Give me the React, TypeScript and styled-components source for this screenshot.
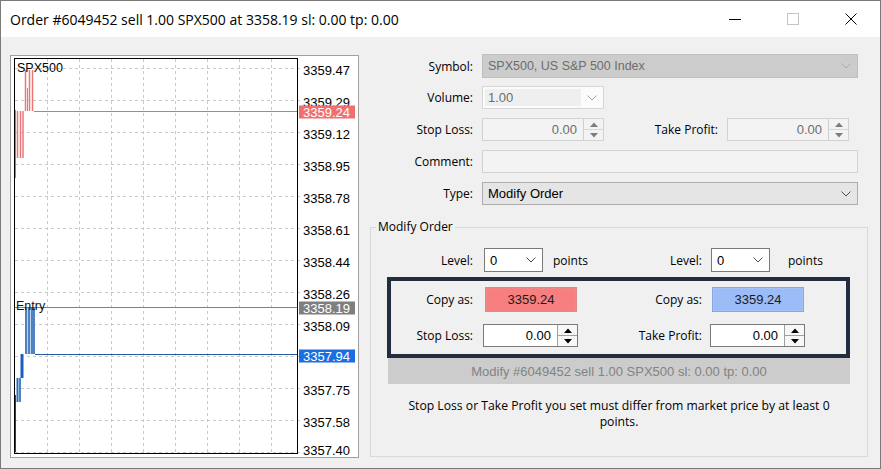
import React from 'react'
import styled, { createGlobalStyle } from 'styled-components'

const ui = '"Open Sans", "Noto Sans", sans-serif'
const tahoma = '"Liberation Sans", Arial, sans-serif'

const colors = {
  face: '#f0f0f0',
  frame: '#7a7a7a',
  darkBox: '#222d3f',
  grid: '#c9c9c9',
  red: '#f07070',
  blue: '#1a6fe0',
  grey: '#7f7f7f'
}

const GlobalStyle = createGlobalStyle`
  html, body {
    margin: 0;
    padding: 0;
    background: ${colors.face};
  }
  * {
    box-sizing: border-box;
  }
`

const Window = styled.div`
  width: 881px;
  height: 469px;
  border: 1px solid ${colors.frame};
  background: ${colors.face};
  display: flex;
  flex-direction: column;
  overflow: hidden;
  font-family: ${ui};
  font-size: 12px;
  color: #000;
`
const TitleBar = styled.div`
  height: 36px;
  flex-shrink: 0;
  background: #fff;
  display: flex;
  align-items: center;
  padding-left: 9px;
`
const Title = styled.div`
  flex: 1;
  font-size: 14px;
  white-space: nowrap;
`
const Caption = styled.div`
  width: 58px;
  height: 36px;
  display: flex;
  align-items: center;
  justify-content: center;
`
const Body = styled.div`
  flex: 1;
  display: flex;
  align-items: flex-start;
  padding-left: 9px;
`
const ChartPanel = styled.div`
  width: 349px;
  height: 403px;
  margin-top: 18px;
  border: 1px solid #a0a0a0;
  background: #fff;
  svg {
    display: block;
  }
  text {
    font-family: ${tahoma};
    font-size: 13px;
  }
`
const Pane = styled.div`
  width: 498px;
  margin-left: 11px;
  padding-top: 17px;
  display: flex;
  flex-direction: column;
`
const Row = styled.div<{ $h?: number; $mb?: number; $mt?: number }>`
  display: flex;
  align-items: center;
  height: ${p => p.$h || 23}px;
  margin-top: ${p => p.$mt || 0}px;
  margin-bottom: ${p => (p.$mb === undefined ? 9 : p.$mb)}px;
`
const Label = styled.span<{ $w: number; $gap?: number }>`
  width: ${p => p.$w}px;
  flex-shrink: 0;
  text-align: right;
  margin-right: ${p => (p.$gap === undefined ? 9 : p.$gap)}px;
  white-space: nowrap;
`
const Half = styled.div<{ $w?: number }>`
  display: flex;
  align-items: center;
  height: 100%;
  width: ${p => (p.$w ? `${p.$w}px` : 'auto')};
`
const Combo = styled.div<{ $w: number; $variant: 'disabled' | 'face' | 'white' | 'volume' }>`
  width: ${p => p.$w}px;
  height: 100%;
  display: flex;
  align-items: center;
  justify-content: space-between;
  padding: 0 6px 0 5px;
  font-family: ${tahoma};
  font-size: 13px;
  background: ${p =>
    p.$variant === 'disabled' ? '#cccccc' : p.$variant === 'face' ? '#e5e5e5' : p.$variant === 'volume' ? '#fbfbfb' : '#fff'};
  border: 1px solid
    ${p =>
      p.$variant === 'disabled' ? '#bfbfbf' : p.$variant === 'face' ? '#adadad' : p.$variant === 'volume' ? '#d6d6d6' : '#7a7a7a'};
  color: ${p => (p.$variant === 'disabled' || p.$variant === 'volume' ? '#6d6d6d' : '#000')};
`
const SymbolText = styled.span`
  font-size: 12.5px;
`
const VolumeText = styled.span`
  align-self: stretch;
  display: flex;
  align-items: center;
  background: #efefef;
  margin: 2px 0 2px -3px;
  padding-left: 3px;
  width: 96px;
`
const TextBox = styled.div<{ $w: number }>`
  width: ${p => p.$w}px;
  height: 100%;
  background: #f3f3f3;
  border: 1px solid #d2d2d2;
`
const Spin = styled.div<{ $w: number; $active?: boolean }>`
  width: ${p => p.$w}px;
  height: 100%;
  display: flex;
  background: ${p => (p.$active ? '#fff' : '#f3f3f3')};
  border: 1px solid ${p => (p.$active ? '#7a7a7a' : '#d2d2d2')};
  font-family: ${tahoma};
  font-size: 13px;
  color: ${p => (p.$active ? '#000' : '#6d6d6d')};
`
const SpinValue = styled.div`
  flex: 1;
  display: flex;
  align-items: center;
  justify-content: flex-end;
  padding-right: 6px;
`
const SpinButtons = styled.div<{ $active?: boolean }>`
  width: 20px;
  display: flex;
  flex-direction: column;
  border-left: 1px solid ${p => (p.$active ? '#a0a0a0' : '#cfcfcf')};
  background: ${p => (p.$active ? '#f7f7f7' : '#f3f3f3')};
`
const SpinHalf = styled.div<{ $top?: boolean; $active?: boolean }>`
  flex: 1;
  display: flex;
  align-items: center;
  justify-content: center;
  border-top: ${p => (p.$top ? 'none' : `1px solid ${p.$active ? '#a0a0a0' : '#d8d8d8'}`)};
`
const Group = styled.fieldset`
  margin: 14px 0 0 0;
  padding: 0;
  min-width: 0;
  width: 498px;
  height: 238px;
  border: 1px solid #d9d9d9;
`
const Legend = styled.legend`
  margin-left: 5px;
  padding: 0 2px;
  line-height: 16px;
  font-size: 12px;
`
const Points = styled.span<{ $gap: number }>`
  margin-left: ${p => p.$gap}px;
`
const Highlight = styled.div`
  width: 463px;
  height: 81px;
  margin: 5px 0 0 16px;
  border: 4px solid ${colors.darkBox};
  padding-top: 6px;
`
const CopyButton = styled.div<{ $tone: 'red' | 'blue' }>`
  width: 92px;
  height: 100%;
  display: flex;
  align-items: center;
  justify-content: center;
  font-family: ${tahoma};
  font-size: 13px;
  color: #1b1b1b;
  background: ${p => (p.$tone === 'red' ? '#f77f7f' : '#9cbcf7')};
  border: 1px solid ${p => (p.$tone === 'red' ? '#d98b8b' : '#8aa6dc')};
  box-shadow: inset 0 0 0 1px ${p => (p.$tone === 'red' ? '#f28686' : '#a5c2f6')};
`
const ModifyButton = styled.div`
  width: 462px;
  height: 26px;
  margin-left: 17px;
  display: flex;
  align-items: center;
  justify-content: center;
  background: #cccccc;
  color: #838383;
  font-family: ${tahoma};
  font-size: 13px;
`
const Message = styled.div`
  margin-top: 14px;
  text-align: center;
  line-height: 16px;
  font-size: 12.2px;
`

const Chevron: React.FC<{ color: string }> = ({ color }) => (
  <svg width="10" height="6" viewBox="0 0 10 6">
    <polyline points="0.5,0.5 5,5 9.5,0.5" fill="none" stroke={color} strokeWidth="1" />
  </svg>
)

const Arrow: React.FC<{ up?: boolean; color: string }> = ({ up, color }) => (
  <svg width="8" height="5" viewBox="0 0 8 5">
    <polygon points={up ? '0,5 4,0.5 8,5' : '0,0 4,4.5 8,0'} fill={color} />
  </svg>
)

const SpinBox: React.FC<{ w: number; active?: boolean }> = ({ w, active }) => (
  <Spin $w={w} $active={active}>
    <SpinValue>0.00</SpinValue>
    <SpinButtons $active={active}>
      <SpinHalf $top $active={active}>
        <Arrow up color={active ? '#000' : '#7d7d7d'} />
      </SpinHalf>
      <SpinHalf $active={active}>
        <Arrow color={active ? '#000' : '#7d7d7d'} />
      </SpinHalf>
    </SpinButtons>
  </Spin>
)

const gridX = [47, 79, 111, 143, 175, 207, 239, 271]
const gridY = [68, 100, 132, 164, 196, 228, 260, 292, 324, 356, 388, 420, 452]
// price axis labels; the 3357.92 level sits under the bid tag and is not drawn
const axis: [number, string][] = [
  [75, '3359.47'], [107, '3359.29'], [139, '3359.12'], [171, '3358.95'],
  [203, '3358.78'], [235, '3358.61'], [267, '3358.44'], [299, '3358.26'],
  [331, '3358.09'], [395, '3357.75'], [427, '3357.58'], [455, '3357.40']
]

// tick bars: [x, y1, y2, colour, width]
const bars: [number, number, number, string, number][] = [
  [15.5, 110, 178, '#e06a6a', 1],
  [17.5, 111, 158, '#e87878', 1.5],
  [20.5, 111, 158, '#e87878', 1.5],
  [23, 111, 158, '#e87878', 1.5],
  [25.5, 70, 111, '#e87878', 1.5],
  [27.5, 88, 111, '#e87878', 1],
  [29.5, 70, 111, '#e87878', 1.5],
  [32.5, 70, 111, '#e87878', 1.5],
  [26, 307, 354, '#2b68b0', 1.5],
  [29, 307, 354, '#2b68b0', 1.5],
  [32, 307, 354, '#2b68b0', 1.5],
  [34, 307, 354, '#2b68b0', 1.5],
  [22, 354, 378, '#1a5fc0', 3],
  [17.5, 378, 402, '#2b68b0', 1.5],
  [20, 378, 402, '#2b68b0', 1.5],
  [15.5, 395, 452, '#1f3f7f', 1]
]

const Tag: React.FC<{ y: number; fill: string; label: string }> = ({ y, fill, label }) => (
  <g>
    <rect x={299} y={y - 6} width={56} height={13} fill={fill} />
    <text x={303} y={y + 5} fill="#fff">
      {label}
    </text>
  </g>
)

const Chart: React.FC = () => (
  <svg width="347" height="401" viewBox="11 56 347 401">
    {gridX.map(x => (
      <line key={x} x1={x + 0.5} y1={59} x2={x + 0.5} y2={453} stroke={colors.grid} strokeDasharray="3 3" />
    ))}
    {gridY.map(y => (
      <line key={y} x1={15} y1={y + 0.5} x2={300} y2={y + 0.5} stroke={colors.grid} strokeDasharray="3 3" />
    ))}
    {axis.map(([y, label]) => (
      <text key={label} x={303} y={y} fill="#000">
        {label}
      </text>
    ))}
    <rect x={25} y={307} width={10} height={47} fill="#b9d3ee" />
    <rect x={16} y={378} width={5} height={24} fill="#b9d3ee" />
    <line x1={34} y1={111.5} x2={297} y2={111.5} stroke="#e86b6b" />
    <line x1={15} y1={307.5} x2={297} y2={307.5} stroke="#808080" />
    <line x1={35} y1={354.5} x2={297} y2={354.5} stroke="#245a9a" />
    {bars.map(([x, y1, y2, c, w], i) => (
      <line key={i} x1={x} y1={y1} x2={x} y2={y2} stroke={c} strokeWidth={w} />
    ))}
    <rect x={14.5} y={58.5} width={283} height={395} fill="none" stroke="#000" />
    <text x={17} y={72} fill="#000" style={{ fontSize: 12.5 }}>
      SPX500
    </text>
    <text x={16} y={310} fill="#111" style={{ fontSize: 12.5 }}>
      Entry
    </text>
    <Tag y={111.5} fill={colors.red} label="3359.24" />
    <Tag y={307.5} fill={colors.grey} label="3358.19" />
    <Tag y={355.5} fill={colors.blue} label="3357.94" />
  </svg>
)

const App: React.FC = () => (
  <>
    <GlobalStyle />
    <Window>
      <TitleBar>
        <Title>Order #6049452 sell 1.00 SPX500 at 3358.19 sl: 0.00 tp: 0.00</Title>
        <Caption>
          <svg width="12" height="12" viewBox="0 0 12 12">
            <line x1="0" y1="6.5" x2="12" y2="6.5" stroke="#000" />
          </svg>
        </Caption>
        <Caption>
          <svg width="12" height="12" viewBox="0 0 12 12">
            <rect x="0.5" y="0.5" width="11" height="11" fill="none" stroke="#c4c4c4" />
          </svg>
        </Caption>
        <Caption>
          <svg width="12" height="12" viewBox="0 0 12 12">
            <path d="M0.5 0.5 L11.5 11.5 M11.5 0.5 L0.5 11.5" stroke="#000" strokeWidth="1" />
          </svg>
        </Caption>
      </TitleBar>
      <Body>
        <ChartPanel>
          <Chart />
        </ChartPanel>
        <Pane>
          <Row $h={24} $mb={8}>
            <Label $w={103}>Symbol:</Label>
            <Combo $w={376} $variant="disabled">
              <SymbolText>SPX500, US S&amp;P 500 Index</SymbolText>
              <Chevron color="#a9a9a9" />
            </Combo>
          </Row>
          <Row>
            <Label $w={103}>Volume:</Label>
            <Combo $w={122} $variant="volume">
              <VolumeText>1.00</VolumeText>
              <Chevron color="#a9a9a9" />
            </Combo>
          </Row>
          <Row>
            <Label $w={103}>Stop Loss:</Label>
            <SpinBox w={122} />
            <Label $w={114}>Take Profit:</Label>
            <SpinBox w={122} />
          </Row>
          <Row>
            <Label $w={103}>Comment:</Label>
            <TextBox $w={376} />
          </Row>
          <Row $mb={0}>
            <Label $w={103}>Type:</Label>
            <Combo $w={376} $variant="face">
              <span>Modify Order</span>
              <Chevron color="#505050" />
            </Combo>
          </Row>
          <Group>
            <Legend>Modify Order</Legend>
            <Row $h={24} $mb={0} $mt={13}>
              <Half $w={229}>
                <Label $w={102} $gap={11}>Level:</Label>
                <Combo $w={59} $variant="white">
                  <span>0</span>
                  <Chevron color="#505050" />
                </Combo>
                <Points $gap={10}>points</Points>
              </Half>
              <Half>
                <Label $w={102}>Level:</Label>
                <Combo $w={59} $variant="white">
                  <span>0</span>
                  <Chevron color="#505050" />
                </Combo>
                <Points $gap={18}>points</Points>
              </Half>
            </Row>
            <Highlight>
              <Row $h={25} $mb={12}>
                <Half $w={209}>
                  <Label $w={82} $gap={12}>Copy as:</Label>
                  <CopyButton $tone="red">3359.24</CopyButton>
                </Half>
                <Half>
                  <Label $w={102} $gap={10}>Copy as:</Label>
                  <CopyButton $tone="blue">3359.24</CopyButton>
                </Half>
              </Row>
              <Row $mb={0}>
                <Half $w={209}>
                  <Label $w={82} $gap={10}>Stop Loss:</Label>
                  <SpinBox w={95} active />
                </Half>
                <Half>
                  <Label $w={102} $gap={8}>Take Profit:</Label>
                  <SpinBox w={95} active />
                </Half>
              </Row>
            </Highlight>
            <ModifyButton>Modify #6049452 sell 1.00 SPX500 sl: 0.00 tp: 0.00</ModifyButton>
            <Message>
              Stop Loss or Take Profit you set must differ from market price by at least 0
              <br />
              points.
            </Message>
          </Group>
        </Pane>
      </Body>
    </Window>
  </>
)

export default App
